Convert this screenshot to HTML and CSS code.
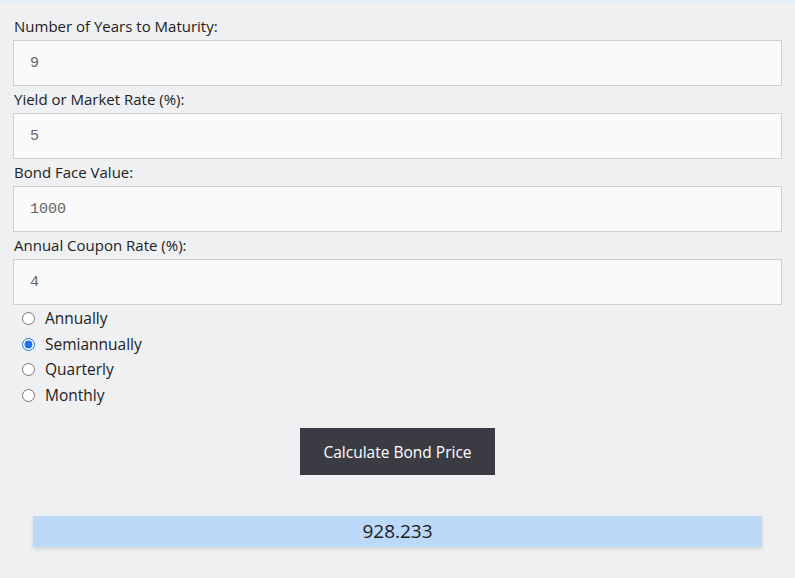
FILE: index.html
```html
<!DOCTYPE html>
<html lang="en">
<head>
    <meta charset="UTF-8">
    <meta name="viewport" content="width=device-width, initial-scale=1.0">
    <title>Bond Price Calculator</title>
    <link rel="stylesheet" href="styles.css">
</head>
<body>
    <div class="calculator">
        <form id="bondForm">
            <label for="years">Number of Years to Maturity:</label>
            <input type="text" id="years" value="9">

            <label for="yield">Yield or Market Rate (%):</label>
            <input type="text" id="yield" value="5">

            <label for="face">Bond Face Value:</label>
            <input type="text" id="face" value="1000">

            <label for="coupon">Annual Coupon Rate (%):</label>
            <input type="text" id="coupon" value="4">

            <div class="frequency">
                <label class="radio"><input type="radio" name="freq" value="1"> Annually</label>
                <label class="radio"><input type="radio" name="freq" value="2" checked> Semiannually</label>
                <label class="radio"><input type="radio" name="freq" value="4"> Quarterly</label>
                <label class="radio"><input type="radio" name="freq" value="12"> Monthly</label>
            </div>

            <div class="actions">
                <button type="submit">Calculate Bond Price</button>
            </div>
        </form>

        <div class="result" id="result">928.233</div>
    </div>
</body>
</html>
```

FILE: styles.css
```css
* {
    margin: 0;
    padding: 0;
    box-sizing: border-box;
}

body {
    font-family: "Open Sans", "Noto Sans", sans-serif;
    background-color: #eef0f2;
    height: 578px;
    overflow: hidden;
}

.calculator {
    border-top: 3px solid #e1eff9;
    padding: 10px 13px 0 13px;
}

label {
    display: block;
    font-size: 15px;
    line-height: 27px;
    color: #222;
    padding-left: 1px;
}

input[type="text"] {
    display: block;
    width: 100%;
    height: 46px;
    padding: 0 16px;
    border: 1px solid #cfcfcf;
    background-color: #fafafa;
    font-family: "Liberation Mono", monospace;
    font-size: 15px;
    color: #666;
}

.frequency {
    padding-top: 1px;
}

.radio {
    display: flex;
    align-items: center;
    height: 25.5px;
    line-height: 25.5px;
    font-size: 15.5px;
}

.radio input {
    width: 13px;
    height: 13px;
    margin: 0 10px 0 8px;
    accent-color: #1a73e8;
}

.actions {
    display: flex;
    justify-content: center;
    margin-top: 20px;
}

button {
    width: 195px;
    height: 47px;
    background-color: #3b3c43;
    color: #fff;
    border: none;
    font-family: "Open Sans", "Noto Sans", sans-serif;
    font-size: 15.5px;
    cursor: pointer;
}

.result {
    margin: 41px 20px 0 20px;
    height: 31px;
    line-height: 31px;
    background-color: #bcd9fa;
    box-shadow: 0 2px 4px rgba(0,0,0,0.12);
    text-align: center;
    font-size: 19px;
    color: #1b1b22;
}
```
